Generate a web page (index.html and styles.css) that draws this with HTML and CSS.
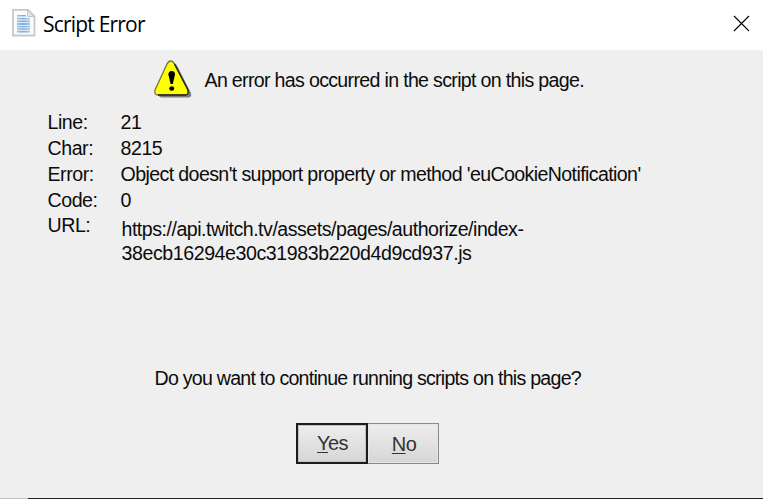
FILE: index.html
```html
<!DOCTYPE html>
<html lang="en">
<head>
<meta charset="utf-8">
<title>Script Error</title>
<link rel="stylesheet" href="styles.css">
</head>
<body>
<main class="dialog">
  <header class="titlebar">
    <svg class="doc-icon" width="24" height="28" viewBox="0 0 24 28">
      <defs><linearGradient id="ink"><stop offset="0" stop-color="#a9c8e8"/><stop offset=".5" stop-color="#78a9da"/><stop offset="1" stop-color="#b4cde8"/></linearGradient></defs>
      <path d="M1 .8h15l6.500 6.500V26.500H1z" fill="#fbfbfb" stroke="#c8c8c8" stroke-width="1.800"/>
      <path d="M15.500 1v6.500h6.500z" fill="#e4e4e4" stroke="#c4c4c4"/>
      <path d="M5 6h9v1.200H5zM5 9h13v1.200H5zM5 11.500h13v1.400H5zM5 14h13v2H5zM5 17h13v1.200H5zM5 19.300h13v1.400H5zM5 22h13v1.500H5z" fill="url(#ink)"/>
      <path d="M5 6h9v17.500H5zM14 9h4v14.500h-4z" fill="#8db8e6" opacity=".25"/>
    </svg>
    <h1 class="title">Script Error</h1>
    <svg class="close" width="17" height="17" viewBox="0 0 17 17"><path d="M1 1l15 15M16 1L1 16" stroke="#000" stroke-width="1.100"/></svg>
  </header>
  <section class="message">
    <svg class="warning" width="38" height="38" viewBox="0 0 38 38">
      <path d="M19 3q3 0 4 2.500L37 33q1 4.500-3 4.500H8q-4 0-3-4z" fill="#7c7c7c"/>
      <path d="M17 1q2 0 3.500 3L34 30q1 5-3 5H4q-4 0-3-5L13 4q1.500-3 4-3z" fill="#ff0" stroke="#77773a" stroke-width="1.300"/>
      <path d="M20.500 4L34 30q1 5-3 5H4" fill="none" stroke="#222" stroke-width="1.300"/>
      <path d="M17.700 11q3.300 0 3.300 3.500l-2.200 9.500h-2.200l-2.200-9.500q0-3.500 3.300-3.500z"/>
      <ellipse cx="17.700" cy="28.500" rx="2.500" ry="2.300"/>
    </svg>
    <p class="headline">An error has occurred in the script on this page.</p>
  </section>
  <dl class="details">
    <dt>Line:</dt><dd>21</dd>
    <dt>Char:</dt><dd>8215</dd>
    <dt>Error:</dt><dd class="error">Object doesn't support property or method 'euCookieNotification'</dd>
    <dt>Code:</dt><dd>0</dd>
    <dt>URL:</dt><dd class="url">https://api.twitch.tv/assets/pages/authorize/index-<br><span class="hash">38ecb16294e30c31983b220d4d9cd937.js</span></dd>
  </dl>
  <p class="question">Do you want to continue running scripts on this page?</p>
  <div class="actions">
    <button class="button default"><span><u>Y</u>es</span></button>
    <button class="button"><span><u>N</u>o</span></button>
  </div>
  <div class="edge"></div>
</main>
</body>
</html>
```
FILE: styles.css
```css
* { box-sizing: border-box; }
body, h1, p, dl, dd { margin: 0; }
body { background: #efefef; overflow: hidden; }
.dialog {
  width: 763px;
  height: 499px;
  display: flex;
  flex-direction: column;
  color: #0c0c0c;
  font: 19.6px/24px "Liberation Sans", Arial, sans-serif;
  letter-spacing: -0.45px;
}
.titlebar {
  flex: none;
  height: 50px;
  padding: 0 13px 0 12px;
  display: flex;
  align-items: flex-start;
  background: #fff;
}
.doc-icon { margin-top: 9px; }
.title {
  margin: 9px 0 0 7px;
  font: 21px/30px "Open Sans", "Noto Sans", sans-serif;
  letter-spacing: -0.8px;
  color: #000;
}
.close { margin: 15px 0 0 auto; }
.message {
  display: flex;
  height: 60.4px;
  padding: 10px 0 0 154px;
}
.headline { margin: 8px 0 0 12.5px; letter-spacing: -0.68px; }
.details {
  display: grid;
  grid-template-columns: 73px 1fr;
  grid-auto-rows: 25.75px;
  padding-left: 47.5px;
  height: 255.6px;
}
.error { letter-spacing: -0.61px; }
.url { padding: 3.2px 0 0 1px; letter-spacing: -0.49px; }
.hash { letter-spacing: -0.43px; }
.question { padding-left: 154.500px; height: 57px; letter-spacing: -0.75px; }
.actions { display: flex; padding-left: 296px; height: 75px; }
.button {
  width: 71px;
  height: 41px;
  padding: 2px 0 0 2px;
  border: 1px solid #8a8a8a;
  border-left: 0;
  background: linear-gradient(#ededed, #d6d6d6);
  box-shadow: inset 0 0 0 1px #e6e6e6;
  color: #333;
  font: inherit;
  font-size: 20px;
  letter-spacing: -0.6px;
}
.default {
  width: 72px;
  padding: 0 0 0 1px;
  border: 2px solid #1c1c1c;
  box-shadow: inset 0 0 0 1px #c4c4c4;
}
.button u { text-underline-offset: 2px; text-decoration-thickness: 1px; }
.edge { height: 1px; background: linear-gradient(90deg, #c0c0c0 28px, #222 28px); }
```
